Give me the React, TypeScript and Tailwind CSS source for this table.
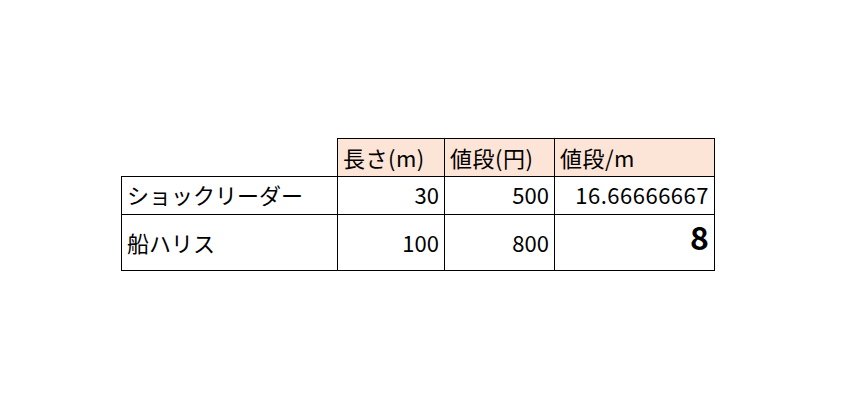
const rows = [
  { name: 'ショックリーダー', length: '30', price: '500', perMeter: '16.66666667', h: 'h-[38px]', pad: 'pb-[9px]', big: false },
  { name: '船ハリス', length: '100', price: '800', perMeter: '8', h: 'h-[56px]', pad: 'pb-[17px]', big: true },
];

export default function App() {
  return (
    <div
      className="w-[860px] h-[406px] bg-white pt-[138px] pl-[121px] text-black text-[22px] leading-none"
      style={{ fontFamily: '"Noto Sans CJK JP", "Noto Sans", sans-serif' }}
    >
      <table className="border-collapse table-fixed">
        <colgroup>
          <col className="w-[216px]" />
          <col className="w-[107px]" />
          <col className="w-[110px]" />
          <col className="w-[160px]" />
        </colgroup>
        <thead>
          <tr className="h-[38px]">
            <th className="p-0"></th>
            <th className="border border-black bg-[#fce4d6] font-normal text-left align-bottom px-[5px] pb-[8px] tracking-[0.5px]">長さ(m)</th>
            <th className="border border-black bg-[#fce4d6] font-normal text-left align-bottom px-[5px] pb-[8px] tracking-[0.5px]">値段(円)</th>
            <th className="border border-black bg-[#fce4d6] font-normal text-left align-bottom px-[5px] pb-[8px] tracking-[0.5px]">値段/m</th>
          </tr>
        </thead>
        <tbody>
          {rows.map((r) => (
            <tr key={r.name} className={r.h}>
              <td className={`border border-black align-bottom px-[5px] ${r.pad}`}>{r.name}</td>
              <td className={`border border-black align-bottom text-right px-[5px] ${r.pad}`}>{r.length}</td>
              <td className={`border border-black align-bottom text-right px-[5px] ${r.pad}`}>{r.price}</td>
              <td
                className={
                  r.big
                    ? 'border border-black align-bottom text-right px-[5px] pb-[18px] text-[32px] font-bold'
                    : `border border-black align-bottom text-right px-[5px] tracking-[0.5px] ${r.pad}`
                }
              >
                {r.perMeter}
              </td>
            </tr>
          ))}
        </tbody>
      </table>
    </div>
  );
}
